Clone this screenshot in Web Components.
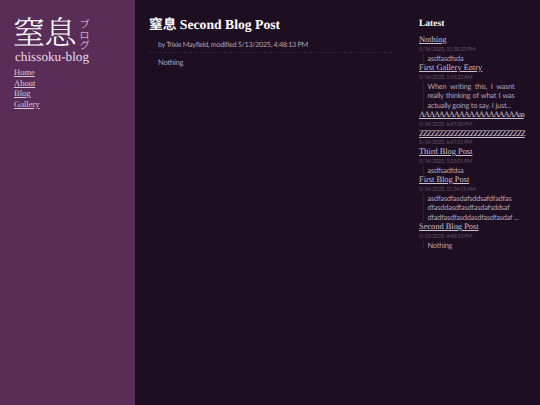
<!DOCTYPE html>
<html><head><meta charset="utf-8">
<style>
html,body{margin:0;padding:0;height:100%;background:#1e0e22;overflow:hidden}
.j{display:block;width:87px;text-align:justify;text-align-last:justify;white-space:nowrap}
.l{display:block;white-space:nowrap}
</style></head><body>
<blog-app>
  <site-sidebar slot="side"></site-sidebar>
  <post-view slot="main" heading="窒息 Second Blog Post" meta="by Trixie Mayfield, modified 5/13/2025, 4:48:13 PM">Nothing</post-view>
  <latest-list slot="aside">
    <latest-item title="Nothing" date="5/16/2025, 11:38:23 PM"><span class="l">asdfasdfsda</span></latest-item>
    <latest-item title="First Gallery Entry" date="5/16/2025, 1:19:23 AM"><span class="j">When writing this, I wasnt</span><span class="j">really thinking of what I was</span><span class="l">actually going to say. I just...</span></latest-item>
    <latest-item title="AAAAAAAAAAAAAAAAAAAAaa" date="5/14/2025, 6:47:28 PM" spacing="-1.08px"></latest-item>
    <latest-item title="ZZZZZZZZZZZZZZZZZZZZZZZZZZZ" date="5/14/2025, 6:47:21 PM" spacing="-1.2px"></latest-item>
    <latest-item title="Third Blog Post" date="5/14/2025, 5:25:01 PM"><span class="l">asdfsadfdsa</span></latest-item>
    <latest-item title="First Blog Post" date="5/14/2025, 11:34:15 AM"><span class="l">asdfasdfasdafsddsafdfadfas</span><span class="l">dfasddasdfasdfasdafsddsaf</span><span class="l">dfadfasdfasddasdfasdfasdaf ...</span></latest-item>
    <latest-item title="Second Blog Post" date="5/13/2025, 4:48:13 PM"><span class="l">Nothing</span></latest-item>
  </latest-list>
</blog-app>
<script>
const SANS='Lato,"Noto Sans CJK JP",sans-serif';
const SERIF='"Liberation Serif","Noto Sans CJK JP",serif';
customElements.define('blog-app',class extends HTMLElement{constructor(){super();this.attachShadow({mode:'open'}).innerHTML=`<style>
:host{display:grid;grid-template-columns:135px 1fr 121px;height:405px;width:540px;background:#1e0e22;opacity:.999;text-rendering:geometricPrecision}
</style><slot name="side"></slot><slot name="main"></slot><slot name="aside"></slot>`}});
customElements.define('site-sidebar',class extends HTMLElement{constructor(){super();this.attachShadow({mode:'open'}).innerHTML=`<style>
:host{display:block;background:#5a2d58;padding:14px 14px 0;box-sizing:border-box;height:405px;font-family:${SERIF}}
.logo{display:flex;align-items:flex-start;color:#fff;height:35px;white-space:nowrap}
.big{font:32px/34px "Noto Serif CJK JP","Noto Sans CJK JP",sans-serif;font-weight:300;letter-spacing:-.5px;margin-left:-1px}
.kana{writing-mode:vertical-rl;font:10.5px/10px "Noto Sans CJK JP",sans-serif;margin-left:3px;margin-top:5px;color:#e8dce8;font-weight:300;height:33px}
.sub{font-size:13.2px;line-height:15px;color:#e6dbe6;margin:0 0 3px 1px}
a{display:block;color:#d5c9d8;font-size:8.5px;line-height:10.6px;text-decoration:underline}
</style><div class="logo"><span class="big">窒息</span><span class="kana">ブログ</span></div>
<div class="sub">chissoku-blog</div><nav><a>Home</a><a>About</a><a>Blog</a><a>Gallery</a></nav>`}});
customElements.define('post-view',class extends HTMLElement{constructor(){super();const s=this.attachShadow({mode:'open'});s.innerHTML=`<style>
:host{display:block;padding:16px 14px 0;font-family:${SANS};font-size:7.2px;letter-spacing:-.3px;color:#b0a4b3}
h1{margin:0;font:bold 13.7px/17px ${SERIF};color:#fff;letter-spacing:0}
.meta{margin:6px 0 0 9px;line-height:11px}
hr{border:0;border-top:1px dashed #332338;margin:2px 13px 0 0}
.body{margin:4px 0 0 9px;line-height:11px;font-size:7.6px;letter-spacing:-.25px}
</style><h1></h1><div class="meta"></div><hr><div class="body"><slot></slot></div>`;
s.querySelector('h1').textContent=this.getAttribute('heading');s.querySelector('.meta').textContent=this.getAttribute('meta')}});
customElements.define('latest-list',class extends HTMLElement{constructor(){super();this.attachShadow({mode:'open'}).innerHTML=`<style>
:host{display:block;padding:18px 0 0 0}
h2{margin:0 0 5px;font:bold 9.5px/12px ${SERIF};color:#fff}
</style><h2>Latest</h2><slot></slot>`}});
customElements.define('latest-item',class extends HTMLElement{constructor(){super();const s=this.attachShadow({mode:'open'});const txt=this.textContent.trim();s.innerHTML=`<style>
:host{display:block;width:108px}
.t{font:8.4px/10.5px ${SERIF};color:#cbc0cf;text-decoration:underline;white-space:nowrap;display:block;letter-spacing:${this.getAttribute('spacing')||'0'}}
.d{font:5.6px/8px ${SANS};letter-spacing:-.3px;color:#5f5063;display:block}
.b{font:7.4px/9.5px ${SANS};letter-spacing:-.2px;color:#b0a4b3;margin:0 0 0 4px;padding-left:3.5px;border-left:1px solid #2e1e33}
</style><span class="t"></span><span class="d"></span>${txt?'<div class="b"><slot></slot></div>':''}`;
s.querySelector('.t').textContent=this.getAttribute('title');s.querySelector('.d').textContent=this.getAttribute('date')}});
</script>
</body></html>
